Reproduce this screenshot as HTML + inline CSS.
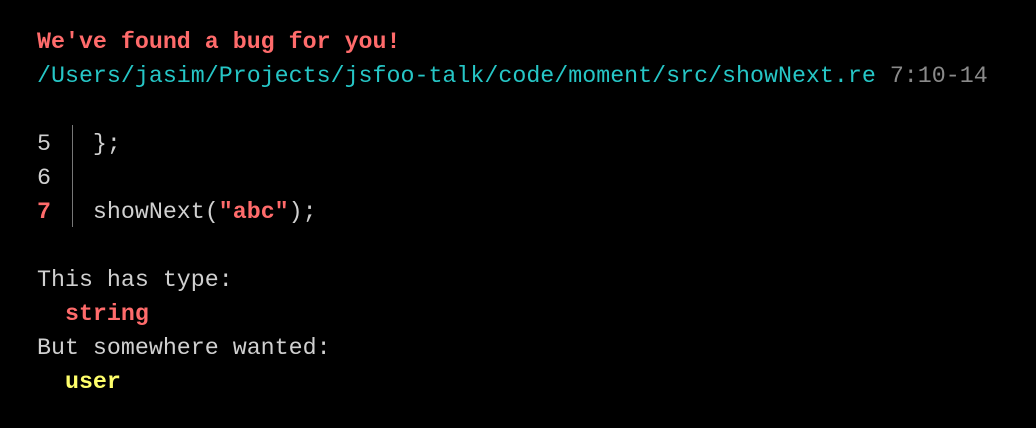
<html><head><style>
body{margin:0;background:#000;width:1036px;height:428px;overflow:hidden}
pre{margin:0;position:absolute;left:37px;top:25px;font-family:"Liberation Mono",monospace;font-size:23.3px;line-height:34px;color:#d0d0d0}
.r{color:#ff6b6b;font-weight:bold}
.c{color:#26c6c6}
.g{color:#8a8a8a}
.y{color:#ffff6b;font-weight:bold}
.bar{position:absolute;left:35px;top:100px;width:1px;height:102px;background:#777}
</style></head><body>
<pre><span class="r">We've found a bug for you!</span>
<span class="c">/Users/jasim/Projects/jsfoo-talk/code/moment/src/showNext.re</span> <span class="g">7:10-14</span>

5   };
6
<span class="r">7</span>   showNext(<span class="r">"abc"</span>);

This has type:
  <span class="r">string</span>
But somewhere wanted:
  <span class="y">user</span>
<span class="bar"></span></pre>
</body></html>
